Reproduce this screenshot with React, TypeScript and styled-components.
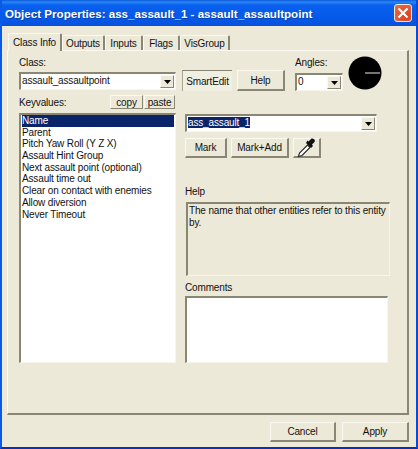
import React from "react";
import styled, { createGlobalStyle } from "styled-components";

const GlobalStyle = createGlobalStyle`
  html, body {
    margin: 0;
    padding: 0;
    background: #0a3fd0;
  }
`;

const keyvalues = [
  "Name",
  "Parent",
  "Pitch Yaw Roll (Y Z X)",
  "Assault Hint Group",
  "Next assault point (optional)",
  "Assault time out",
  "Clear on contact with enemies",
  "Allow diversion",
  "Never Timeout",
];

const tabs = ["Class Info", "Outputs", "Inputs", "Flags", "VisGroup"];

function DropButton() {
  return (
    <Arrow>
      <svg width="7" height="4" viewBox="0 0 7 4">
        <path d="M0 0h7L3.5 4z" fill="#000" />
      </svg>
    </Arrow>
  );
}

function App() {
  return (
    <Window>
      <GlobalStyle />
      <TitleBar>
        <Title>Object Properties: ass_assault_1 - assault_assaultpoint</Title>
        <CloseButton>
          <svg width="12" height="12" viewBox="0 0 12 12">
            <path d="M1.5 1.5l9 9M10.5 1.5l-9 9" stroke="#fff" strokeWidth="2.2" />
          </svg>
        </CloseButton>
      </TitleBar>
      <Body>
        <TabRow>
          {tabs.map((t, i) => (
            <Tab key={t} $active={i === 0} $index={i}>
              {t}
            </Tab>
          ))}
        </TabRow>
        <Panel>
          <TopRow>
            <ClassColumn>
              <Label>Class:</Label>
              <Combo>
                <ComboText>assault_assaultpoint</ComboText>
                <DropButton />
              </Combo>
            </ClassColumn>
            <SmartEdit>SmartEdit</SmartEdit>
            <HelpButton>Help</HelpButton>
            <AnglesColumn>
              <Label>Angles:</Label>
              <AngleCombo>
                <ComboText>0</ComboText>
                <DropButton />
              </AngleCombo>
            </AnglesColumn>
            <Dial width="34" height="34" viewBox="0 0 34 34">
              <circle cx="17" cy="17" r="16.5" fill="#000" />
              <path d="M17 17H32" stroke="#e8e8e0" strokeWidth="1" />
            </Dial>
          </TopRow>
          <MainRow>
            <LeftColumn>
              <KeyHeader>
                <KeyLabel>Keyvalues:</KeyLabel>
                <SmallButton $width={33}>copy</SmallButton>
                <SmallButton $width={31}>paste</SmallButton>
              </KeyHeader>
              <KeyList>
                {keyvalues.map((k, i) => (
                  <KeyRow key={k} $selected={i === 0}>
                    {k}
                  </KeyRow>
                ))}
              </KeyList>
            </LeftColumn>
            <RightColumn>
              <ValueCombo>
                <ComboText>
                  <Selected>ass_assault_1</Selected>
                </ComboText>
                <DropButton />
              </ValueCombo>
              <ButtonRow>
                <Button $width={42}>Mark</Button>
                <Button $width={58}>Mark+Add</Button>
                <Button $width={28}>
                  <svg width="22" height="20" viewBox="0 0 22 20">
                    <path
                      d="M2.5 18.5l1-3.5 8-8 2.500 2.500-8 8z"
                      fill="#fff"
                      stroke="#222"
                      strokeWidth="1.1"
                    />
                    <path d="M10 5l5 5 2-2-1-1.500 2.500-2.500c1.500-2-1.500-4.500-3.500-3l-2.500 2.500-1-1z" fill="#111" />
                  </svg>
                </Button>
              </ButtonRow>
              <HelpLabel>Help</HelpLabel>
              <HelpBox>The name that other entities refer to this entity by.</HelpBox>
              <CommentsLabel>Comments</CommentsLabel>
              <CommentsBox />
            </RightColumn>
          </MainRow>
        </Panel>
        <Footer>
          <Button $width={66} $height={20}>
            Cancel
          </Button>
          <Button $width={67} $height={20}>
            Apply
          </Button>
        </Footer>
      </Body>
    </Window>
  );
}

const Window = styled.div`
  box-sizing: border-box;
  width: 418px;
  height: 449px;
  display: flex;
  flex-direction: column;
  background: #ece9d8;
  border-left: 2px solid #0a5ae8;
  border-right: 2px solid #0a4ad8;
  border-bottom: 2px solid #0a2fb8;
  font-family: "Liberation Sans", Arial, sans-serif;
  font-size: 10px;
  letter-spacing: -0.15px;
  color: #111;
  overflow: hidden;
`;

const TitleBar = styled.div`
  flex: none;
  height: 26px;
  margin: 0 -2px;
  padding: 0 6px 0 5px;
  display: flex;
  align-items: center;
  justify-content: space-between;
  background: linear-gradient(
    180deg,
    #0a58d8 0,
    #2a86f4 2px,
    #0a60ee 5px,
    #0458e8 20px,
    #0a50d8 26px
  );
`;

const Title = styled.div`
  font-size: 11.6px;
  font-weight: bold;
  letter-spacing: 0;
  color: #fff;
  text-shadow: 1px 1px #0a3fa8;
  white-space: nowrap;
`;

const CloseButton = styled.div`
  box-sizing: border-box;
  width: 18px;
  height: 18px;
  display: flex;
  align-items: center;
  justify-content: center;
  background: radial-gradient(circle at 70% 70%, #d8401c, #e8704c);
  border: 1px solid #f4e8e0;
  border-radius: 3px;
`;

const Body = styled.div`
  flex: 1;
  min-height: 0;
  display: flex;
  flex-direction: column;
  padding: 0 6px 0 5px;
`;

const TabRow = styled.div`
  flex: none;
  height: 24px;
  display: flex;
  align-items: flex-end;
  padding-left: 1px;
  position: relative;
  z-index: 1;
`;

const Tab = styled.div<{ $active: boolean; $index: number }>`
  box-sizing: border-box;
  width: ${(p) => [54, 43, 38, 37, 50][p.$index]}px;
  height: ${(p) => (p.$active ? 18 : 15)}px;
  margin-bottom: ${(p) => (p.$active ? -1 : 0)}px;
  display: flex;
  align-items: center;
  justify-content: center;
  background: #ece9d8;
  border-top: 1px solid #fbfaf2;
  border-left: 1px solid #fbfaf2;
  border-right: 2px solid #8a8674;
  border-radius: 2px 2px 0 0;
  white-space: nowrap;
`;

const Panel = styled.div`
  box-sizing: border-box;
  flex: none;
  width: 402px;
  height: 365px;
  display: flex;
  flex-direction: column;
  padding: 6px 0 0 11px;
  background: #ece9d8;
  border-top: 1px solid #fbfaf2;
  border-left: 1px solid #fbfaf2;
  border-right: 2px solid #8a8674;
  border-bottom: 2px solid #8a8674;
`;

const TopRow = styled.div`
  display: flex;
  align-items: flex-start;
  height: 37px;
`;

const ClassColumn = styled.div`
  width: 157px;
  display: flex;
  flex-direction: column;
  gap: 3px;
`;

const Label = styled.div`
  height: 12px;
  line-height: 12px;
`;

const Combo = styled.div`
  box-sizing: border-box;
  height: 18px;
  display: flex;
  align-items: stretch;
  padding: 1px;
  background: #fff;
  border-top: 2px solid #8a8674;
  border-left: 2px solid #8a8674;
  border-right: 1px solid #f8f6ec;
  border-bottom: 1px solid #f8f6ec;
`;

const ComboText = styled.div`
  flex: 1;
  min-width: 0;
  line-height: 12px;
  white-space: nowrap;
`;

const Arrow = styled.div`
  box-sizing: border-box;
  flex: none;
  width: 14px;
  display: flex;
  align-items: center;
  justify-content: center;
  background: #ece9d8;
  border-top: 1px solid #fbfaf2;
  border-left: 1px solid #fbfaf2;
  border-right: 1px solid #8a8674;
  border-bottom: 1px solid #8a8674;
`;

const Bevel = styled.div`
  box-sizing: border-box;
  display: flex;
  align-items: center;
  justify-content: center;
  background: #ece9d8;
  border-top: 1px solid #fbfaf2;
  border-left: 1px solid #fbfaf2;
  border-right: 2px solid #8a8674;
  border-bottom: 2px solid #8a8674;
  white-space: nowrap;
`;

const SmartEdit = styled.div`
  box-sizing: border-box;
  flex: none;
  width: 50px;
  height: 21px;
  margin: 13px 0 0 6px;
  display: flex;
  align-items: center;
  justify-content: center;
  background: #f1efe2;
  border-top: 1px solid #8a8674;
  border-left: 1px solid #a8a494;
`;

const HelpButton = styled(Bevel)`
  flex: none;
  width: 48px;
  height: 21px;
  margin: 13px 0 0 5px;
`;

const AnglesColumn = styled.div`
  width: 48px;
  margin-left: 10px;
  display: flex;
  flex-direction: column;
  gap: 3px;
`;

const AngleCombo = styled(Combo)`
  margin-top: 1px;
`;

const Dial = styled.svg`
  flex: none;
  margin: -1px 0 0 5px;
`;

const MainRow = styled.div`
  flex: 1;
  min-height: 0;
  display: flex;
  margin-top: 1px;
`;

const LeftColumn = styled.div`
  width: 157px;
  flex: none;
  display: flex;
  flex-direction: column;
`;

const KeyHeader = styled.div`
  height: 18px;
  display: flex;
  align-items: flex-start;
`;

const KeyLabel = styled.div`
  flex: 1;
  line-height: 12px;
  margin-top: 2px;
`;

const SmallButton = styled(Bevel)<{ $width: number }>`
  width: ${(p) => p.$width}px;
  height: 14px;
  border-right-width: 1px;
  border-bottom-width: 1px;
  margin-right: 1px;
`;

const KeyList = styled.div`
  box-sizing: border-box;
  width: 157px;
  height: 250px;
  padding: 0 1px;
  background: #fff;
  border-top: 2px solid #8a8674;
  border-left: 2px solid #8a8674;
  border-right: 1px solid #f8f6ec;
  border-bottom: 1px solid #f8f6ec;
`;

const KeyRow = styled.div<{ $selected: boolean }>`
  height: 11.7px;
  line-height: 12px;
  white-space: nowrap;
  background: ${(p) => (p.$selected ? "#0a246a" : "transparent")};
  color: ${(p) => (p.$selected ? "#fff" : "#111")};
`;

const RightColumn = styled.div`
  flex: none;
  width: 205px;
  margin-left: 9px;
  padding-top: 19px;
  display: flex;
  flex-direction: column;
`;

const ValueCombo = styled(Combo)`
  width: 192px;
`;

const Selected = styled.span`
  background: #0a246a;
  color: #fff;
`;

const ButtonRow = styled.div`
  display: flex;
  gap: 4px;
  margin-top: 6px;
`;

const Button = styled(Bevel)<{ $width: number; $height?: number }>`
  width: ${(p) => p.$width}px;
  height: ${(p) => p.$height ?? 20}px;
`;

const HelpLabel = styled.div`
  line-height: 12px;
  margin-top: 28px;
`;

const HelpBox = styled.div`
  box-sizing: border-box;
  width: 204px;
  height: 74px;
  margin: 4px 0 0 1px;
  padding: 1px;
  line-height: 12px;
  border-top: 2px solid #8a8674;
  border-left: 2px solid #8a8674;
  border-right: 1px solid #f8f6ec;
  border-bottom: 1px solid #f8f6ec;
`;

const CommentsLabel = styled.div`
  line-height: 12px;
  margin-top: 6px;
`;

const CommentsBox = styled.div`
  box-sizing: border-box;
  width: 203px;
  height: 67px;
  margin-top: 2px;
  background: #fff;
  border-top: 2px solid #8a8674;
  border-left: 2px solid #8a8674;
  border-right: 1px solid #f8f6ec;
  border-bottom: 1px solid #f8f6ec;
`;

const Footer = styled.div`
  flex: 1;
  display: flex;
  justify-content: flex-end;
  gap: 6px;
  padding: 7px 0 0 0;
  width: 402px;
`;

export default App;
